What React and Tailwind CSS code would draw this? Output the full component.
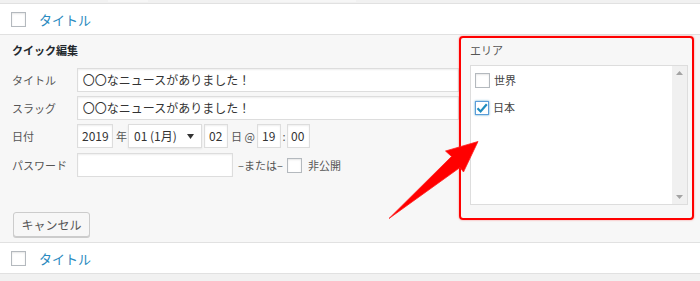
import React from "react";

const font = { fontFamily: '"Noto Sans CJK JP", "Noto Sans", sans-serif' };

function Box({ className = "" }) {
  return (
    <div
      className={
        "w-[15px] h-[15px] border border-[#b4b9be] bg-white shadow-[inset_0_1px_2px_rgba(0,0,0,0.1)] " +
        className
      }
    />
  );
}

function ListRow() {
  return (
    <div className="h-[32px] bg-white border-y border-[#e1e1e1] flex items-center pl-[11px]">
      <Box />
      <span className="ml-[13px] text-[13px] text-[#2a8ac0] leading-none">タイトル</span>
    </div>
  );
}

function Input({ className = "", children }) {
  return (
    <div
      className={
        "h-[24px] bg-white border border-[#dddddd] shadow-[inset_0_1px_2px_rgba(0,0,0,0.07)] flex items-center text-[12px] text-[#333] " +
        className
      }
    >
      {children}
    </div>
  );
}

export default function App() {
  return (
    <div className="w-[700px] h-[281px] bg-[#f1f1f1] relative overflow-hidden" style={font}>
      <div className="h-[3px] relative">
        <div className="absolute left-[108px] top-0 w-[40px] h-[2px] bg-[#f6f6f6]" />
        <div className="absolute left-[270px] top-0 w-[86px] h-[2px] bg-[#f6f6f6]" />
      </div>
      <ListRow />
      <div className="h-[207px] bg-[#f7f7f7] flex">
        <div className="w-[459px] pl-[12px] pt-[8px]">
          <div className="text-[11px] font-bold text-[#23282d] leading-[15px]">クイック編集</div>
          <div className="mt-[10px] flex items-center">
            <span className="w-[65px] text-[11px] text-[#555]">タイトル</span>
            <Input className="w-[383px] pl-[5px]">〇〇なニュースがありました！</Input>
          </div>
          <div className="mt-[4px] flex items-center">
            <span className="w-[65px] text-[11px] text-[#555]">スラッグ</span>
            <Input className="w-[383px] pl-[5px]">〇〇なニュースがありました！</Input>
          </div>
          <div className="mt-[4px] flex items-center h-[24px] text-[11px] text-[#555]">
            <span className="w-[65px]">日付</span>
            <Input className="w-[36px] h-[22px] pl-[4px]">2019</Input>
            <span className="w-[15px] pl-[3px]">年</span>
            <div className="w-[74px] h-[24px] bg-white border border-[#dddddd] shadow-[0_1px_2px_rgba(0,0,0,0.07)] flex items-center justify-between pl-[5px] pr-[7px] text-[12px] text-[#333]">
              <span>01 (1月)</span>
              <svg width="7" height="5" viewBox="0 0 7 5"><path d="M0 0 L7 0 L3.5 5 Z" fill="#333" /></svg>
            </div>
            <Input className="ml-[2px] w-[24px] h-[22px] pl-[4px]">02</Input>
            <span className="w-[29px] pl-[3px]">日 @</span>
            <Input className="w-[24px] h-[22px] pl-[4px]">19</Input>
            <span className="w-[6px] text-center">:</span>
            <Input className="w-[23px] h-[22px] pl-[3px]">00</Input>
          </div>
          <div className="mt-[5px] flex items-center h-[24px] text-[11px] text-[#555]">
            <span className="w-[65px]">パスワード</span>
            <Input className="w-[156px]" />
            <span className="ml-[5px] w-[49px]">–または–</span>
            <Box className="w-[14px] h-[14px]" />
            <span className="ml-[6px]">非公開</span>
          </div>
          <div className="mt-[35px] ml-[1px] w-[77px] h-[25px] bg-[#f7f7f7] border border-[#cccccc] rounded-[3px] shadow-[0_1px_0_#cccccc] flex items-center justify-center text-[12px] text-[#555]">
            キャンセル
          </div>
        </div>
        <div className="pt-[1px]">
          <div className="w-[235px] h-[184px] border-2 border-[#ff0000] rounded-[4px] shadow-[0_0_2px_rgba(255,0,0,0.5)] pl-[9px] pr-[4px] pt-[3px]">
            <div className="text-[11px] text-[#555] leading-[15px] mt-[2px]">エリア</div>
            <div className="mt-[7px] h-[140px] bg-white border border-[#dddddd] flex">
              <div className="flex-1 pl-[4px] pt-[7px]">
                <div className="flex items-center h-[15px]">
                  <Box className="w-[14px] h-[14px]" />
                  <span className="ml-[4px] text-[11px] text-[#444]">世界</span>
                </div>
                <div className="flex items-center h-[15px] mt-[12px]">
                  <div className="w-[14px] h-[14px] border border-[#5b9dd9] bg-white shadow-[0_0_2px_rgba(30,140,190,0.8)] flex items-center justify-center">
                    <svg width="12" height="12" viewBox="0 0 12 12">
                      <path d="M1.5 6.2 L4.6 9.4 L10.8 2.2" stroke="#1e8cbe" strokeWidth="2.2" fill="none" />
                    </svg>
                  </div>
                  <span className="ml-[4px] text-[11px] text-[#444]">日本</span>
                </div>
              </div>
              <div className="w-[15px] bg-[#f0f0f0] flex flex-col items-center justify-between py-[5px]">
                <svg width="7" height="4" viewBox="0 0 7 4"><path d="M0 4 L3.5 0 L7 4 Z" fill="#a3a3a3" /></svg>
                <svg width="7" height="4" viewBox="0 0 7 4"><path d="M0 0 L3.5 4 L7 0 Z" fill="#a3a3a3" /></svg>
              </div>
            </div>
          </div>
        </div>
      </div>
      <ListRow />
      <svg className="absolute left-0 top-0 pointer-events-none" width="700" height="281" viewBox="0 0 700 281">
        <polygon
          points="478,141.5 445.5,151 451.5,156.5 389,218.5 460,167.5 463.5,172"
          fill="#ff0000"
          stroke="#ff2020"
          strokeWidth="0.8"
          strokeLinejoin="round"
        />
      </svg>
    </div>
  );
}
